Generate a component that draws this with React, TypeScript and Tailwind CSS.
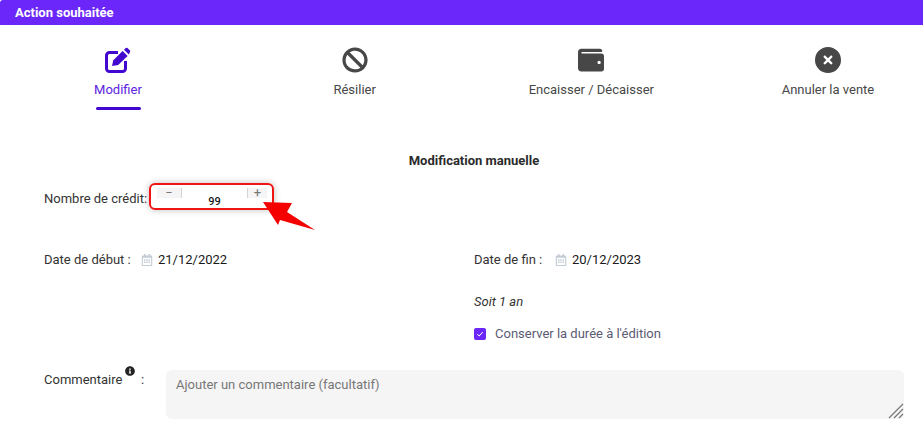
import { FaBan, FaInfoCircle, FaRegCalendarAlt, FaWallet } from 'react-icons/fa';
import { FaCircleXmark } from 'react-icons/fa6';
import type { ReactNode } from 'react';

function EditIcon() {
  return (
    <svg width="26" height="26" viewBox="0 0 26 26" fill="currentColor">
      <path d="M13 5.5 H4.5 A3 3 0 0 0 1.5 8.5 V21.5 A3 3 0 0 0 4.5 24.5 H17.5 A3 3 0 0 0 20.5 21.5 V14" fill="none" stroke="currentColor" strokeWidth="3" />
      <path d="M7 19 L8.3 13.2 L17.6 4 L22.6 9 L13.2 18 Z" />
      <path d="M19 2.7 L20.8 1 Q21.6 0.4 22.5 1 L25 3.4 Q25.6 4.2 25 5 L23.8 7.6 Z" />
    </svg>
  );
}

function ActionTab({ icon, label, active }: { icon: ReactNode; label: string; active?: boolean }) {
  return (
    <div className={`flex w-[130px] flex-col items-center ${active ? 'text-[#4308d0]' : 'text-[#474747]'}`}>
      <div className="flex h-[28px] shrink-0 items-center justify-center text-[26px]">{icon}</div>
      <div className={`mt-[7px] text-[13px] leading-[18px] whitespace-nowrap ${active ? 'text-[#5a24e0]' : ''}`}>{label}</div>
      {active && <div className="mt-[8px] h-[3px] w-[45px] shrink-0 rounded-full bg-[#4308d0]" />}
    </div>
  );
}

function DateField({ label, value, labelWidth }: { label: string; value: string; labelWidth: string }) {
  return (
    <div className="flex items-center">
      <span className={`${labelWidth} whitespace-nowrap`}>{label}</span>
      <FaRegCalendarAlt className="mr-[5px] text-[12px] text-[#c3ccd6]" />
      <span className="text-[#1a1a1a]">{value}</span>
    </div>
  );
}

export default function App() {
  return (
    <div className="h-[429px] w-[923px] overflow-hidden bg-white font-['Roboto',sans-serif] text-[13px] leading-[18px] text-[#333333]">
      {/* Header */}
      <div className="flex h-[25px] items-center rounded-tl-[3px] bg-[#6b26fa] pl-[15px] text-[13px] font-bold text-white">
        Action souhaitée
      </div>

      {/* Tabs */}
      <div className="flex h-[85px] justify-between pt-[21px] pr-[30px] pl-[53px]">
        <ActionTab icon={<EditIcon />} label="Modifier" active />
        <ActionTab icon={<FaBan />} label="Résilier" />
        <ActionTab icon={<FaWallet />} label="Encaisser / Décaisser" />
        <ActionTab icon={<FaCircleXmark />} label="Annuler la vente" />
      </div>

      <div className="pr-[19px] pl-[44px]">
        <div className="mt-[42px] text-center text-[13px] font-bold text-[#2b2b2b]">Modification manuelle</div>

        {/* Credit stepper */}
        <div className="relative mt-[13px] flex h-[27px] items-start">
          <span className="w-[105px] pt-[7px] whitespace-nowrap">Nombre de crédit:</span>
          <div className="flex h-[27px] w-[125px] items-start rounded-[6px] border-[2px] border-[#f01414] pt-[3px] pr-[5px] pl-[6px] shadow-[0_0_7px_rgba(0,0,0,0.25)]">
            <div className="flex h-[10px] w-[25px] items-center justify-center border-r border-[#d4d4d4] bg-[#f5f5f5] text-[13px] text-[#777777]">−</div>
            <div className="h-[20px] flex-1 pt-[6px] text-center text-[11px] leading-[16px] font-medium text-[#1a1a1a]">99</div>
            <div className="flex h-[10px] w-[20px] items-center justify-center border-l border-[#d4d4d4] bg-[#f5f5f5] text-[13px] text-[#777777]">+</div>
          </div>
          <svg className="absolute top-[17px] left-[216px]" width="58" height="32" viewBox="0 0 58 32">
            <path d="M3 2 L32 3 L27 12 L55 30 L20 20 L18 25 Z" fill="#f40000" />
          </svg>
        </div>

        {/* Dates */}
        <div className="mt-[41px] grid grid-cols-2 items-start">
          <DateField label="Date de début :" value="21/12/2022" labelWidth="w-[97px]" />
          <div>
            <DateField label="Date de fin :" value="20/12/2023" labelWidth="w-[81px]" />
            <div className="mt-[24px] text-[#333333] italic">Soit 1 an</div>
            <div className="mt-[14px] flex items-center">
              <span className="flex h-[12px] w-[12px] items-center justify-center rounded-[2px] bg-[#6b26fa]">
                <svg width="8" height="8" viewBox="0 0 8 8" fill="none">
                  <path d="M1.2 4.2 L3.2 6 L6.8 2" stroke="white" strokeWidth="1" />
                </svg>
              </span>
              <span className="ml-[9px] text-[#5b5b73]">Conserver la durée à l'édition</span>
            </div>
          </div>
        </div>

        {/* Comment */}
        <div className="mt-[27px] flex items-start">
          <div className="relative w-[122px] pt-[1px]">
            Commentaire
            <FaInfoCircle className="absolute top-[-4px] left-[81px] text-[10px] text-[#222222]" />
            <span className="absolute top-[1px] left-[97px]">:</span>
          </div>
          <div className="relative flex-1">
            <textarea
              readOnly
              placeholder="Ajouter un commentaire (facultatif)"
              className="block h-[49px] w-full resize-none rounded-[6px] bg-[#f5f5f5] px-[10px] py-[6px] text-[13px] leading-[18px] placeholder:text-[#777777]"
            />
            <svg className="absolute right-0 bottom-0" width="16" height="16" viewBox="0 0 16 16" stroke="#777777" strokeWidth="1.2">
              <path d="M1 15 L15 1 M6 15 L15 6 M11 15 L15 11" />
            </svg>
          </div>
        </div>
      </div>
    </div>
  );
}
